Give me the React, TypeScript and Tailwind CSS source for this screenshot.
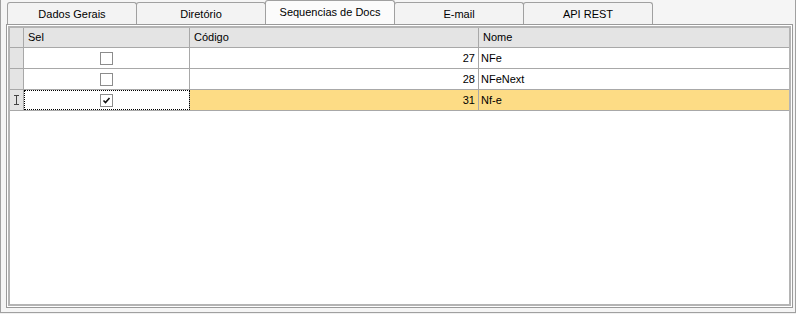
import React from "react";

type Row = { sel: boolean; codigo: number; nome: string };

const rows: Row[] = [
  { sel: false, codigo: 27, nome: "NFe" },
  { sel: false, codigo: 28, nome: "NFeNext" },
  { sel: true, codigo: 31, nome: "Nf-e" },
];

const tabs = ["Dados Gerais", "Diretório", "Sequencias de Docs", "E-mail", "API REST"];
const activeTab = 2;
const activeRow = 2;

function CheckBox({ checked }: { checked: boolean }) {
  return (
    <span className="flex h-[13px] w-[13px] items-center justify-center border border-[#8c8c8c] bg-white">
      {checked && (
        <svg width="9" height="9" viewBox="0 0 9 9">
          <path d="M1.5 4.5 L3.5 6.5 L7.5 2" fill="none" stroke="#111" strokeWidth="1.6" />
        </svg>
      )}
    </span>
  );
}

function EditMark() {
  return (
    <svg width="7" height="10" viewBox="0 0 7 10">
      <path d="M1 0.5 H6 M3.5 0.5 V9.5 M1 9.5 H6" fill="none" stroke="#444" strokeWidth="1" />
    </svg>
  );
}

export default function App() {
  return (
    <div className="h-[314px] w-[796px] bg-[#f0f0f0] font-['Liberation_Sans',Arial,sans-serif] text-[11px] text-black">
      <div className="h-[313px] w-[796px] border-x border-b border-[#a0a0a0] bg-[#f5f5f5] pl-[5px]">
        <div className="flex h-[24px] items-end pl-px">
          {tabs.map((t, i) =>
            i === activeTab ? (
              <div
                key={t}
                className="-ml-px flex h-[24px] w-[130px] items-center justify-center rounded-t-[3px] border border-b-0 border-[#a0a0a0] bg-[#fbfbfb] pb-px"
              >
                {t}
              </div>
            ) : (
              <div
                key={t}
                className={`${i === 0 ? "" : "-ml-px"} flex h-[22px] w-[130px] items-center justify-center rounded-t-[3px] border border-b-0 border-[#a0a0a0] bg-[#f3f3f3] pt-px`}
              >
                {t}
              </div>
            )
          )}
        </div>
        <div className="h-[284px] w-[787px] border border-[#9a9a9a] bg-white p-px">
          <div className="h-[280px] w-[783px] border-2 border-[#b4b4b4] bg-white">
            <div className="flex h-[20px] border-b border-[#a8a8a8] bg-[#e4e4e4]">
              <div className="w-[14px] border-r border-[#a8a8a8]" />
              <div className="flex w-[166px] items-center border-r border-[#a8a8a8] pl-[4px]">Sel</div>
              <div className="flex w-[289px] items-center border-r border-[#a8a8a8] pl-[4px]">Código</div>
              <div className="flex flex-1 items-center pl-[4px]">Nome</div>
            </div>
            {rows.map((r, i) => {
              const active = i === activeRow;
              return (
                <div key={r.codigo} className="flex h-[21px] border-b border-[#a8a8a8]">
                  <div className="flex w-[14px] items-center justify-center border-r border-[#a8a8a8] bg-[#e4e4e4]">
                    {active && <EditMark />}
                  </div>
                  <div
                    className={`flex w-[166px] items-center justify-center border-r border-[#a8a8a8] bg-white ${
                      active ? "outline-1 -outline-offset-1 outline-dotted outline-black" : ""
                    }`}
                  >
                    <CheckBox checked={r.sel} />
                  </div>
                  <div
                    className={`flex w-[289px] items-center justify-end border-r border-[#a8a8a8] pr-[3px] ${
                      active ? "bg-[#fddc85]" : "bg-white"
                    }`}
                  >
                    {r.codigo}
                  </div>
                  <div className={`flex flex-1 items-center pl-[2px] ${active ? "bg-[#fddc85]" : "bg-white"}`}>
                    {r.nome}
                  </div>
                </div>
              );
            })}
          </div>
        </div>
      </div>
    </div>
  );
}
